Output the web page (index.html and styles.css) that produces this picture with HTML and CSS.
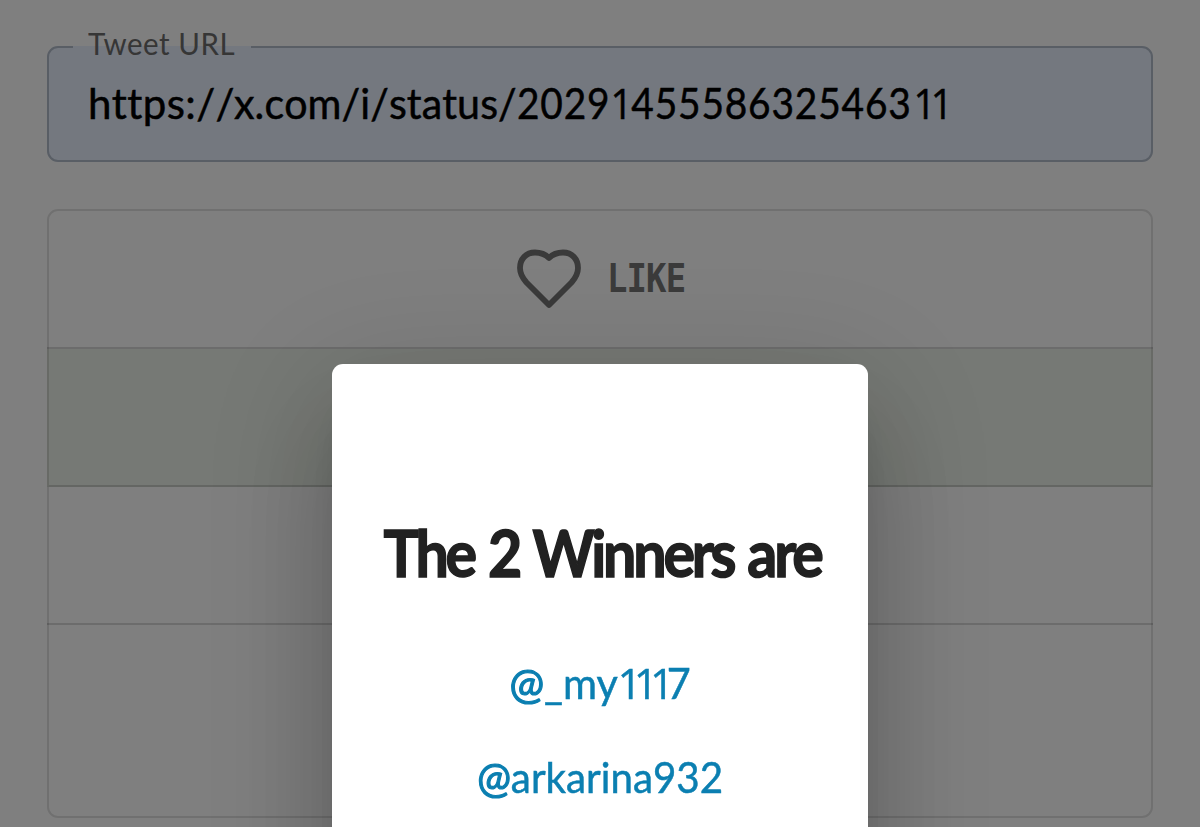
FILE: index.html
```html
<!DOCTYPE html>
<html lang="en">
<head>
<meta charset="utf-8">
<title>Tweet winners</title>
<link rel="stylesheet" href="styles.css">
</head>
<body>
<main class="page">
  <div class="field">
    <div class="field-value"><span class="scheme">https://</span><span class="path">x.com/i/status/</span><span class="digits">2029<span class="one">1</span>455586325463<span class="ones">11</span></span></div>
    <fieldset class="field-outline"><legend></legend></fieldset>
    <label class="field-label">Tweet URL</label>
  </div>
  <div class="group">
    <div class="row like">
      <svg class="heart" viewBox="0 0 66 60"><path d="M33 9C28 4 23 3.500 19 3.500C10 3.500 4 10 4 19C4 25 6.500 29 10.500 33.500L33 56L55.500 33.500C59.500 29 62 25 62 19C62 10 56 3.500 47 3.500C43 3.500 38 4 33 9Z"/></svg>
      <span class="like-text">LIKE</span>
    </div>
    <div class="row selected"></div>
    <div class="row"></div>
    <div class="row last"></div>
  </div>
</main>
<div class="backdrop">
  <section class="dialog">
    <h2 class="title">The 2 Winners are</h2>
    <a class="winner first"><span class="at">@</span>_my<span class="run">111</span>7</a>
    <a class="winner second"><span class="at">@</span>arkarina932</a>
  </section>
</div>
</body>
</html>
```
FILE: styles.css
```css
* { box-sizing: border-box; }
body { margin: 0; height: 827px; overflow: hidden; background: #fff; font-family: Lato, sans-serif; }
.page { padding: 46px 47px 0; }
.field { position: relative; height: 116px; border-radius: 11px; background: #e8f0fe; padding: 29px 41px; }
.field-value { display: flex; font-size: 42px; line-height: 56px; color: #000; white-space: nowrap; font-kerning: none; font-variant-ligatures: none; -webkit-text-stroke: .5px #000; }
.scheme { width: 146px; letter-spacing: .4px; }
.path { width: 283px; letter-spacing: .1px; transform: scaleX(.98); transform-origin: left; }
.digits { letter-spacing: .900px; transform: scaleX(.925); transform-origin: left; }
.one, .ones, .run { font-family: "Open Sans", sans-serif; line-height: 1; }
.one { letter-spacing: -1.500px; }
.ones { letter-spacing: -5.500px; margin-left: 2px; }
.field-outline { position: absolute; inset: 0; margin: 0; padding: 0 0 0 24px; border: 2px solid rgba(20,35,50,.25); border-radius: 11px; }
.field-outline legend { width: 178px; height: 2px; padding: 0; }
.field-label { position: absolute; left: 41px; top: -21px; font-size: 31px; line-height: 36px; letter-spacing: .6px; color: #6c6c6c; white-space: nowrap; transform: scaleX(.95); transform-origin: left; }
.group { margin-top: 47px; height: 609px; border: 2px solid rgba(0,0,0,.12); border-radius: 11px; display: flex; flex-direction: column; }
.row { height: 138px; flex: none; margin: 0 -2px; border-bottom: 2px solid rgba(0,0,0,.15); }
.selected { background: #edf3ea; border-left: 2px solid rgba(0,0,0,.12); border-right: 2px solid rgba(0,0,0,.12); }
.last { border: 0; }
.like { display: flex; align-items: center; justify-content: center; gap: 27px; color: #757575; }
.heart { width: 66px; height: 60px; fill: none; stroke: currentColor; stroke-width: 5.800; stroke-linejoin: round; }
.like-text { font-family: "DejaVu Sans Mono", monospace; font-size: 39px; line-height: 50px; width: 76px; font-weight: 700; letter-spacing: -1px; transform: translateX(-2px) scaleX(.87); transform-origin: left; }
.backdrop { position: fixed; inset: 0; background: rgba(0,0,0,.5); display: flex; justify-content: center; padding-top: 364px; }
.dialog { width: 536px; height: 900px; flex: none; border-radius: 11px; background: #fff; padding-top: 143px; display: flex; flex-direction: column; align-items: center; box-shadow: 0 32px 44px -20px rgba(0,0,0,.2), 0 69px 110px 9px rgba(0,0,0,.14), 0 26px 133px 23px rgba(0,0,0,.12); }
.title { margin: 0; font-size: 65px; line-height: 90px; font-weight: 700; letter-spacing: -3.500px; word-spacing: 3px; color: #212121; white-space: nowrap; transform: translateX(2px) scaleX(.91); -webkit-text-stroke: 1.500px #212121; }
.winner { color: #0b7fb1; font-size: 42px; line-height: 60px; white-space: nowrap; -webkit-text-stroke: .5px #0b7fb1; }
.at { -webkit-text-stroke-width: 1.200px; }
.run { letter-spacing: -7.500px; }
.first { margin-top: 56px; transform: scaleX(.985); }
.second { margin-top: 34px; transform: scaleX(.96); }
```
